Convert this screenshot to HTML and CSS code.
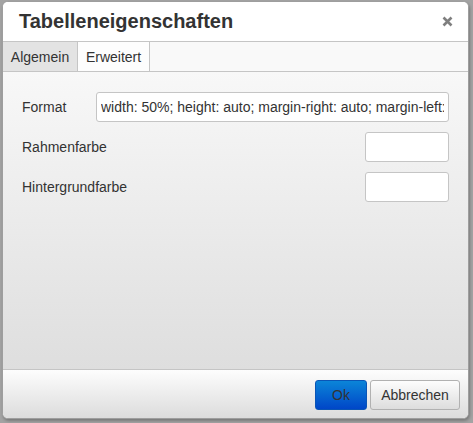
FILE: index.html
```html
<!DOCTYPE html>
<html>
<head>
<meta charset="utf-8">
<link rel="stylesheet" href="styles.css">
</head>
<body>
<div class="window">
  <div class="head">
    <div class="title">Tabelleneigenschaften</div>
    <svg class="close" width="11" height="11" viewBox="0 0 11 11"><path d="M1.5 1.5 L9.5 9.5 M9.5 1.5 L1.5 9.5" stroke="#7f7f7f" stroke-width="2.6" stroke-linecap="butt"/></svg>
  </div>
  <div class="tabs">
    <div class="tab first">Algemein</div>
    <div class="tab active">Erweitert</div>
  </div>
  <div class="panel">
    <div class="row">
      <label class="label">Format</label>
      <input class="input wide" type="text" value="width: 50%; height: auto; margin-right: auto; margin-left: auto;">
    </div>
    <div class="row">
      <label class="label">Rahmenfarbe</label>
      <input class="input small" type="text" value="">
    </div>
    <div class="row">
      <label class="label">Hintergrundfarbe</label>
      <input class="input small" type="text" value="">
    </div>
  </div>
  <div class="foot">
    <button class="btn primary">Ok</button>
    <button class="btn">Abbrechen</button>
  </div>
</div>
</body>
</html>
```
FILE: styles.css
```css
html, body {
  margin: 0;
  padding: 0;
}
body {
  background: #a3a3a3;
  width: 473px;
  height: 423px;
  overflow: hidden;
  font-family: "Liberation Sans", Arial, sans-serif;
  font-size: 14px;
  color: #333;
}
.window {
  margin: 1px 0 0 2px;
  width: 467px;
  height: 418px;
  box-sizing: border-box;
  border: 1px solid #9e9e9e;
  border-radius: 6px;
  box-shadow: 1px 2px 3px rgba(0,0,0,0.25);
  overflow: hidden;
  display: flex;
  flex-direction: column;
  background: #fff;
}
.head {
  height: 39px;
  flex: none;
  border-bottom: 1px solid #c5c5c5;
  display: flex;
  align-items: center;
  justify-content: space-between;
  padding: 0 15px 0 16px;
  background: #fff;
}
.title {
  font-size: 20px;
  font-weight: bold;
  color: #333;
  line-height: 24px;
  margin-top: -1px;
}
.close {
  display: block;
}
.tabs {
  flex: none;
  height: 29px;
  display: flex;
  background: #f9f9f9;
  border-bottom: 1px solid #c5c5c5;
}
.tab {
  box-sizing: border-box;
  width: 72px;
  text-align: center;
  padding-top: 2px;
  line-height: 27px;
  border-right: 1px solid #c5c5c5;
  background: #fdfdfd;
  color: #333;
}
.tab.first {
  width: 75px;
  background: #e3e3e3;
}
.panel {
  flex: 1;
  background: linear-gradient(#f8f8f8, #dedede);
  padding: 20px 19px 0 19px;
  display: flex;
  flex-direction: column;
  gap: 10px;
  border-bottom: 1px solid #c5c5c5;
}
.row {
  display: flex;
  align-items: center;
  justify-content: space-between;
  height: 30px;
}
.label {
  color: #333;
  font-size: 14px;
}
.input {
  box-sizing: border-box;
  height: 30px;
  border: 1px solid #c5c5c5;
  border-radius: 3px;
  background: #fff;
  font-family: "Liberation Sans", Arial, sans-serif;
  font-size: 14px;
  color: #333;
  padding: 0 4px;
  outline: none;
}
.input.wide {
  width: 353px;
}
.input.small {
  width: 84px;
}
.foot {
  flex: none;
  height: 48px;
  background: linear-gradient(#fdfdfd, #dcdcdc);
  display: flex;
  align-items: flex-start;
  justify-content: flex-end;
  padding: 10px 8px 0 0;
  box-sizing: border-box;
  gap: 3px;
}
.btn {
  height: 30px;
  box-sizing: border-box;
  border: 1px solid #b1b1b1;
  border-radius: 3px;
  background: linear-gradient(#fdfdfd, #dddddd);
  font-family: "Liberation Sans", Arial, sans-serif;
  font-size: 14px;
  color: #333;
  padding: 0 4px;
  width: 90px;
}
.btn.primary {
  width: 52px;
  border-color: #0a55b6;
  background: linear-gradient(#0b85d8, #0046c8);
  color: #333;
}
```
